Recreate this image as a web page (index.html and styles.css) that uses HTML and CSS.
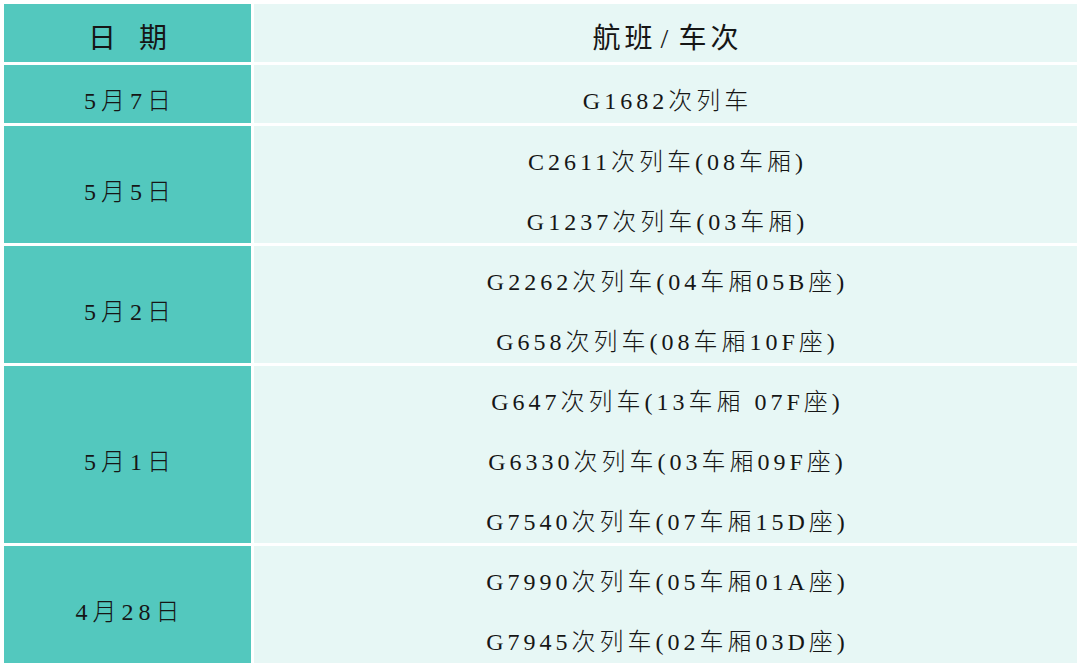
FILE: index.html
```html
<!DOCTYPE html>
<html lang="zh-CN">
<head>
<meta charset="utf-8">
<title>航班/车次</title>
<link rel="stylesheet" href="styles.css">
</head>
<body>
<div class="table">
  <div class="cell date head"><div class="lines"><div class="line">日 期</div></div></div>
  <div class="cell trip head"><div class="lines"><div class="line">航班<span class="slash">/</span>车次</div></div></div>

  <div class="cell date"><div class="lines"><div class="line">5月7日</div></div></div>
  <div class="cell trip"><div class="lines"><div class="line">G1682次列车</div></div></div>

  <div class="cell date"><div class="lines two"><div class="line">5月5日</div></div></div>
  <div class="cell trip"><div class="lines">
    <div class="line">C2611次列车(08车厢)</div>
    <div class="line">G1237次列车(03车厢)</div>
  </div></div>

  <div class="cell date"><div class="lines two"><div class="line">5月2日</div></div></div>
  <div class="cell trip"><div class="lines">
    <div class="line">G2262次列车(04车厢05B座)</div>
    <div class="line">G658次列车(08车厢10F座)</div>
  </div></div>

  <div class="cell date"><div class="lines three"><div class="line">5月1日</div></div></div>
  <div class="cell trip"><div class="lines">
    <div class="line">G647次列车(13车厢 07F座)</div>
    <div class="line">G6330次列车(03车厢09F座)</div>
    <div class="line">G7540次列车(07车厢15D座)</div>
  </div></div>

  <div class="cell date"><div class="lines two"><div class="line">4月28日</div></div></div>
  <div class="cell trip"><div class="lines">
    <div class="line">G7990次列车(05车厢01A座)</div>
    <div class="line">G7945次列车(02车厢03D座)</div>
  </div></div>
</div>
</body>
</html>
```

FILE: styles.css
```css
* { box-sizing: border-box; }

html, body {
  margin: 0;
  padding: 0;
  background: #ffffff;
}

body {
  width: 1080px;
  height: 668px;
  overflow: hidden;
  font-family: "Liberation Serif", "Noto Sans CJK SC", serif;
  color: #161616;
}

.table {
  display: grid;
  grid-template-columns: 247px 1fr;
  column-gap: 3px;
  row-gap: 3px;
  padding: 4px 3px 0 4px;
}

.cell {
  display: flex;
  flex-direction: column;
  justify-content: center;
  min-height: 58px;
}

.date {
  background: #53c8be;
}

.trip {
  background: #e7f7f5;
}

.lines {
  display: flex;
  flex-direction: column;
  margin: -1.5px 0;
}

.line {
  height: 60px;
  display: flex;
  align-items: center;
  justify-content: center;
  padding-top: 14px;
  padding-left: 4px;
  font-size: 24px;
  line-height: 1;
  letter-spacing: 4px;
  white-space: pre;
  font-weight: 300;
}

.date .line {
  letter-spacing: 5px;
  padding-left: 5px;
}

.head .line {
  font-size: 28px;
  font-weight: 400;
  padding-top: 11px;
  word-spacing: 6px;
}

.slash {
  margin: 0 6px 0 4px;
}
```
